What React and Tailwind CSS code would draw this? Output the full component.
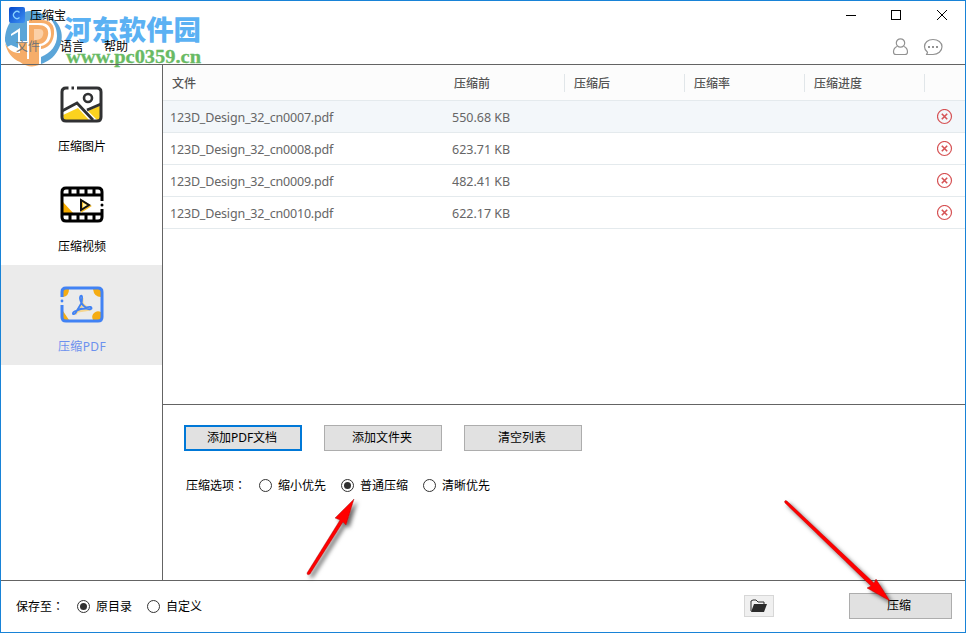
import React from "react";

const files = [
  ["123D_Design_32_cn0007.pdf", "550.68 KB"],
  ["123D_Design_32_cn0008.pdf", "623.71 KB"],
  ["123D_Design_32_cn0009.pdf", "482.41 KB"],
  ["123D_Design_32_cn0010.pdf", "622.17 KB"],
];

function Watermark() {
  return (
    <svg className="pointer-events-none absolute -left-px -top-px" width="210" height="68" viewBox="0 0 210 68">
      <path d="M5 41C5 24 15 12 30 11C36 10 41 12 46 17L39 20L27 21V41H20V28L11 34V45L7 47Z" fill="#5ba5d8" />
      <path d="M11 36L18 32V48L11 45Z" fill="#5ba5d8" />
      <path d="M5 43C9 51 14 53 20 53V43H27V59H29V25H38C46 25 49 29 48 35C47 41 43 44 39 44V65Q29 69 20 62C12 59 7 52 5 43Z" fill="#f6ad69" />
      <path d="M34 29H39C43 29 44 32 43 35C42 39 39 40 34 40Z" fill="#fbd0a7" />
      <path d="M29 20H42C50 20 55 25 54 34C53 43 48 48 41 49V46C47 45 51 40 51 34C51 27 48 23 41 23H29Z" fill="#f6ad69" />
      <path d="M47 15C61 21 66 37 58 50C54 58 47 62 41 64V57C51 53 57 45 57 36C57 27 53 21 47 15Z" fill="#5ba5d8" />
      <text x="64" y="39.5" textLength="137" lengthAdjust="spacingAndGlyphs" fontFamily="Noto Sans CJK SC, sans-serif" fontSize="27" fontWeight="900" fill="#5bb1f3">河东软件园</text>
      <text x="66" y="63" textLength="135" lengthAdjust="spacingAndGlyphs" fontFamily="Liberation Serif, serif" fontSize="19" fontWeight="700" fill="#69ba64" stroke="#69ba64" strokeWidth=".3">www.pc0359.cn</text>
    </svg>
  );
}

function ImageIcon() {
  return (
    <svg width="44" height="38" viewBox="0 0 44 38" fill="none">
      <path d="M3 29L18 22L29 34H4Z" fill="#fbd21f" />
      <path d="M28 25L41 19V34H37Z" fill="#fbd21f" />
      <path d="M8.5 2H6Q2 2 2 6V31Q2 35 6 35H37Q41 35 41 31V6Q41 2 37 2H17" stroke="#303133" strokeWidth="3" />
      <path d="M11.5 2H14" stroke="#303133" strokeWidth="3" />
      <path d="M2 25L17 17L33 34M27 24L41 18" stroke="#303133" strokeWidth="2.8" />
      <circle cx="28" cy="12" r="4" stroke="#303133" strokeWidth="2.6" />
    </svg>
  );
}

function VideoIcon() {
  return (
    <svg width="44" height="38" viewBox="0 0 44 38" fill="none">
      <path d="M3 16L14 28H3Z" fill="#f5ab00" />
      <path d="M42 15V6Q42 2 38 2H6Q2 2 2 6V31Q2 35 6 35H38Q42 35 42 31V23M2 9H42M2 28H42M10 2V9M18 2V9M26 2V9M34 2V9M10 28V35M18 28V35M26 28V35M34 28V35" stroke="#000" strokeWidth="3" />
      <circle cx="42" cy="19" r="1.5" fill="#000" />
      <path d="M21 14V24L29 19Z" fill="#fff3b0" stroke="#f7bd28" strokeWidth="2" transform="translate(1 1)" />
      <path d="M21 14V24L29 19Z" stroke="#111" strokeWidth="2" />
    </svg>
  );
}

function PdfIcon() {
  return (
    <svg width="44" height="38" viewBox="0 0 44 38" fill="none">
      <path d="M3 3H9Q9 10 3 11ZM33 3H41V11Q34 11 33 3ZM3 25L9 34H3ZM41 26V34H33Q31 30 34 27Q37 24 41 26Z" fill="#f5ac12" />
      <path d="M2 11V6Q2 2 6 2H38Q42 2 42 6V31Q42 35 38 35H6Q2 35 2 31V19" stroke="#4182f4" strokeWidth="3" />
      <circle cx="2" cy="15" r="1.4" fill="#4182f4" />
      <path d="M22 12V18L28 23M22 19L15 28M18 25L31 23" stroke="#f5d58e" strokeWidth="3" />
      <path d="M20.5 10Q22.5 9 22 13Q22 15 21.5 17Q23 20 26 21.5Q32 20 31.5 22.5Q30 24 25.5 22.5Q20 22.5 17 24.5Q15 29 13 28Q12 26 17 24.5L21.5 17Q19 12 20.5 10Z" stroke="#4182f4" strokeWidth="1.8" />
    </svg>
  );
}

function SideItem({ icon, label, active }) {
  return (
    <div className={`flex h-[100px] flex-col items-center pl-px pt-[21px] ${active ? "bg-[#ebebeb] text-[#6c91ee]" : "text-black"}`}>
      <div className="-ml-px h-[52px]">{icon}</div>
      <span className={`text-xs leading-[18px] ${active ? "tracking-[.35px]" : ""}`}>{label}</span>
    </div>
  );
}

function Radio({ label, checked }) {
  return (
    <label className="flex items-center gap-[6px]">
      <span className="flex h-[13px] w-[13px] items-center justify-center rounded-full border border-[#333] bg-white">
        {checked && <span className="h-[7px] w-[7px] rounded-full bg-[#303030]" />}
      </span>
      <span>{label}</span>
    </label>
  );
}

function Button({ children, focused }) {
  return (
    <button className={`h-[26px] w-[118px] bg-[#e1e1e1] pr-[2px] text-center leading-[22px] ${focused ? "border-2 border-[#0078d7]" : "border border-[#adadad]"}`}>
      {children}
    </button>
  );
}

function RemoveIcon() {
  return (
    <svg width="16" height="16" viewBox="0 0 16 16" fill="none" stroke="#d65355">
      <circle cx="7.5" cy="7.5" r="7" strokeWidth="1.2" />
      <path d="M4.8 4.8L10.2 10.2M10.2 4.8L4.8 10.2" strokeWidth="1.6" />
    </svg>
  );
}

function Arrows() {
  return (
    <svg className="pointer-events-none absolute -left-px -top-px" width="966" height="633">
      <defs>
        <filter id="shade" x="-20%" y="-20%" width="150%" height="150%">
          <feDropShadow dx="3" dy="3" stdDeviation="2" floodColor="#000" floodOpacity=".6" />
        </filter>
      </defs>
      <g fill="#f00" stroke="#941515" strokeWidth=".4" filter="url(#shade)">
        <path d="M307 573L340 520L335 518L354 499L346 525L343 522L310 574Q307 576 307 573Z" />
        <path d="M784.5 501.5Q785 500 787 501L874 583L876 579L890 601L867 588L871 586L785 503Z" />
      </g>
    </svg>
  );
}

export default function App() {
  return (
    <div className="relative flex h-[633px] w-[966px] flex-col overflow-hidden border border-[#1883d7] bg-white text-xs text-black [font-family:'Noto_Sans','Noto_Sans_CJK_SC',sans-serif]">
      <Watermark />
      <header className="relative flex h-[64px] shrink-0 flex-col border-b border-[#646464]">
        <div className="flex h-7 items-center pl-2">
          <svg width="16" height="16" viewBox="0 0 16 16">
            <defs><linearGradient id="app" x2="1" y2="1"><stop stopColor="#0647c9" /><stop offset="1" stopColor="#3e91f4" /></linearGradient></defs>
            <rect width="16" height="16" rx="2" fill="url(#app)" />
            <path d="M10.5 5.5A3.5 3.5 0 1 0 10.5 10.5" fill="none" stroke="#88d1ff" strokeWidth="1.3" />
          </svg>
          <span className="ml-[5px] pt-px">压缩宝</span>
          <svg className="ml-auto mr-[17px]" width="102" height="12" viewBox="0 0 102 12" fill="none" stroke="#000">
            <path d="M0 6.5H10M91 1L101 11M101 1L91 11" />
            <rect x="45.5" y="1.5" width="9" height="9" />
          </svg>
        </div>
        <div className="flex h-[35px] items-center pl-[15px]">
          <span className="pt-px text-[#777]">文件</span>
          <span className="ml-5 pt-px">语言</span>
          <span className="ml-5 pt-px">帮助</span>
          <svg className="ml-auto mr-[22px]" width="51" height="20" viewBox="0 0 51 20" fill="none" stroke="#929292" strokeWidth="1.2">
            <circle cx="8.5" cy="6" r="4.2" />
            <path d="M5 9.5Q1.5 11 1.5 15Q1.5 17.5 4 17.5H13Q15.5 17.5 15.5 15Q15.5 11 12 9.5M34 17.5H41C46 17.5 50 14 50 9.8C50 5.5 46 2.5 41 2.5C36 2.5 32.5 5.5 32.5 9.8Q32.5 13 35.5 15.3Q35.5 17 34 17.5Z" />
            <path d="M36 10H38M40 10H42M44 10H46" strokeWidth="2" />
          </svg>
        </div>
      </header>
      <main className="flex h-[516px] shrink-0">
        <nav className="w-[162px] shrink-0 border-r border-[#646464]">
          <SideItem icon={<ImageIcon />} label="压缩图片" />
          <SideItem icon={<VideoIcon />} label="压缩视频" />
          <SideItem icon={<PdfIcon />} label="压缩PDF" active />
        </nav>
        <section className="flex flex-1 flex-col">
          <div className="h-[340px] border-b border-[#646464]">
            <div className="flex h-9 items-center border-b border-[#e4eaed] bg-[#fcfcfc] font-medium text-[#555]">
              <span className="w-[281px] pl-[9px] pt-[2px]">文件</span>
              <span className="w-[120px] pl-[10px] pt-[2px]">压缩前</span>
              <span className="w-[120px] border-l border-[#e1e6e9] pl-[9px] pt-[2px]">压缩后</span>
              <span className="w-[120px] border-l border-[#e1e6e9] pl-[9px] pt-[2px]">压缩率</span>
              <span className="w-[120px] border-l border-[#e1e6e9] pl-[9px] pt-[2px]">压缩进度</span>
              <span className="h-[18px] border-l border-[#e1e6e9]" />
            </div>
            {files.map(([name, size], index) => (
              <div key={name} className={`flex h-8 items-center border-b border-[#e4eaed] text-[12.5px] text-[#666] ${index === 0 ? "bg-[#f3f7fa]" : ""}`}>
                <span className="w-[281px] pl-[7px] pt-[4px] tracking-[-.18px]">{name}</span>
                <span className="pl-2 pt-[4px]">{size}</span>
                <span className="ml-auto mr-3"><RemoveIcon /></span>
              </div>
            ))}
          </div>
          <div className="px-[21px] pt-5">
            <div className="flex gap-[22px]">
              <Button focused>添加PDF文档</Button>
              <Button>添加文件夹</Button>
              <Button>清空列表</Button>
            </div>
            <div className="mt-[26px] flex items-center leading-4">
              <span className="ml-[2px] w-[73px]">压缩选项<span className="[font-family:'Noto_Sans_CJK_TC',sans-serif]">：</span></span>
              <div className="flex gap-[15px]">
                <Radio label="缩小优先" />
                <Radio label="普通压缩" checked />
                <Radio label="清晰优先" />
              </div>
            </div>
          </div>
        </section>
      </main>
      <footer className="flex h-[51px] items-center pl-[15px] pr-[13px] shadow-[0_-1px_0_#646464]">
        <span className="w-[61px]">保存至<span className="[font-family:'Noto_Sans_CJK_TC',sans-serif]">：</span></span>
        <div className="flex gap-[15px]"><Radio label="原目录" checked /><Radio label="自定义" /></div>
        <button className="mb-[2px] ml-auto flex h-[22px] w-[30px] items-center justify-center border border-[#d7d7d7] bg-[#f0f0f0]">
          <svg width="18" height="14" viewBox="0 0 18 14">
            <path d="M1 12V2L3 1H6L8 3H14V5" fill="none" stroke="#2b2b2b" />
            <path d="M4 5H17L14 13H1Z" fill="#2b2b2b" />
          </svg>
        </button>
        <button className="mb-[2px] ml-[75px] h-[26px] w-[103px] border border-[#adadad] bg-[#e1e1e1] pr-[3px]">压缩</button>
      </footer>
      <Arrows />
    </div>
  );
}
